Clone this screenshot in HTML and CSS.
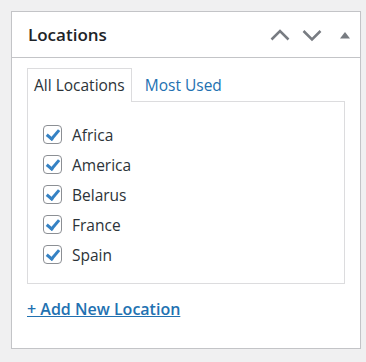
FILE: index.html
```html
<!DOCTYPE html>
<html lang="en">
<head>
    <meta charset="UTF-8">
    <meta name="viewport" content="width=device-width, initial-scale=1.0">
    <title>Locations</title>
    <link rel="stylesheet" href="styles.css">
</head>
<body>
    <div class="postbox">
        <div class="postbox-header">
            <h2 class="title">Locations</h2>
            <div class="handles">
                <button class="handle" aria-label="Move up">
                    <svg width="20" height="20" viewBox="0 0 20 20"><path d="M1.5 14.5 L10 6 L18.5 14.5" fill="none" stroke="#787c82" stroke-width="2.5"/></svg>
                </button>
                <button class="handle" aria-label="Move down">
                    <svg width="20" height="20" viewBox="0 0 20 20"><path d="M1.5 6 L10 14.5 L18.5 6" fill="none" stroke="#787c82" stroke-width="2.5"/></svg>
                </button>
                <button class="handle toggle" aria-label="Toggle panel">
                    <svg width="12" height="20" viewBox="0 0 12 20"><path d="M1 13.5 L6 7 L11 13.5 Z" fill="#787c82"/></svg>
                </button>
            </div>
        </div>
        <div class="inside">
            <ul class="tabs">
                <li class="tab active">All Locations</li>
                <li class="tab"><a href="#">Most Used</a></li>
            </ul>
            <div class="tabs-panel">
                <ul class="checklist">
                    <li><label><input type="checkbox" checked> Africa</label></li>
                    <li><label><input type="checkbox" checked> America</label></li>
                    <li><label><input type="checkbox" checked> Belarus</label></li>
                    <li><label><input type="checkbox" checked> France</label></li>
                    <li><label><input type="checkbox" checked> Spain</label></li>
                </ul>
            </div>
            <a class="add-new" href="#">+ Add New Location</a>
        </div>
    </div>
</body>
</html>
```

FILE: styles.css
```css
body {
    margin: 0;
    background-color: #f0f0f1;
    font-family: "Open Sans", "Noto Sans", sans-serif;
    color: #2c3338;
}
.postbox {
    margin: 11px 0 0 11px;
    width: 350px;
    height: 338px;
    box-sizing: border-box;
    background-color: #fff;
    border: 1px solid #c3c4c7;
    box-shadow: 0 1px 1px rgba(0, 0, 0, 0.04);
}
.postbox-header {
    display: flex;
    align-items: center;
    justify-content: space-between;
    height: 45px;
    border-bottom: 1px solid #c3c4c7;
    padding: 0 4px 0 16px;
}
.title {
    margin: 0;
    font-size: 17px;
    font-weight: 600;
    color: #1d2327;
}
.handles {
    display: flex;
    align-items: center;
}
.handle {
    background: none;
    border: none;
    padding: 0;
    width: 32px;
    height: 34px;
    display: flex;
    align-items: center;
    justify-content: center;
    cursor: pointer;
}
.handle.toggle {
    width: 22px;
    margin-left: 6px;
}
.inside {
    padding: 10px 15px 0;
}
.tabs {
    list-style: none;
    margin: 0;
    padding: 0;
    display: flex;
    height: 34px;
}
.tab {
    font-size: 15.5px;
    line-height: 32px;
    padding: 0 6px;
    margin-right: 6px;
    border: 1px solid transparent;
    border-bottom: none;
}
.tab.active {
    border-color: #dcdcde;
    background-color: #fff;
    position: relative;
    z-index: 1;
    height: 34px;
    box-sizing: border-box;
}
.tab a {
    color: #2271b1;
    text-decoration: none;
}
.tabs-panel {
    border: 1px solid #dcdcde;
    margin-top: -1px;
    height: 183px;
    box-sizing: border-box;
    padding: 22px 15px 0;
}
.checklist {
    list-style: none;
    margin: 0;
    padding: 0;
}
.checklist li {
    height: 30px;
}
.checklist label {
    display: flex;
    align-items: center;
    font-size: 15.5px;
    height: 21px;
    gap: 10px;
}
.checklist input {
    appearance: none;
    margin: 0;
    width: 19px;
    height: 19px;
    border: 1px solid #8c8f94;
    border-radius: 4px;
    background-color: #fff;
    position: relative;
}
.checklist input:checked::before {
    content: "";
    position: absolute;
    left: 5px;
    top: 1px;
    width: 5px;
    height: 10px;
    border: solid #3582c4;
    border-width: 0 3px 3px 0;
    transform: rotate(40deg);
}
.add-new {
    display: inline-block;
    margin-top: 14px;
    font-size: 16px;
    font-weight: 600;
    color: #2271b1;
    text-decoration: underline;
}
```
